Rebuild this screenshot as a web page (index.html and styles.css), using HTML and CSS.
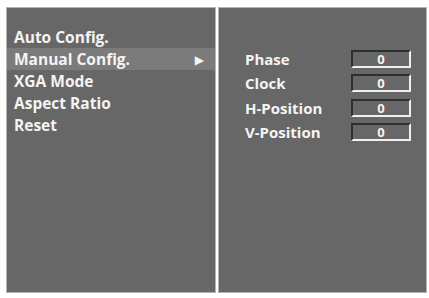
FILE: index.html
```html
<!DOCTYPE html>
<html lang="en">
<head>
    <meta charset="UTF-8">
    <title>Picture Setup</title>
    <link rel="stylesheet" href="styles.css">
</head>
<body>
    <div class="screen">
        <div class="panel menu">
            <div class="item">Auto Config.</div>
            <div class="item active">Manual Config. <span class="arrow">&#9654;</span></div>
            <div class="item">XGA Mode</div>
            <div class="item">Aspect Ratio</div>
            <div class="item">Reset</div>
        </div>
        <div class="panel settings">
            <div class="row"><span class="label">Phase</span><span class="value">0</span></div>
            <div class="row"><span class="label">Clock</span><span class="value">0</span></div>
            <div class="row"><span class="label">H-Position</span><span class="value">0</span></div>
            <div class="row"><span class="label">V-Position</span><span class="value">0</span></div>
        </div>
    </div>
</body>
</html>
```

FILE: styles.css
```css
* { margin: 0; padding: 0; box-sizing: border-box; }
body {
    background: #fff;
    font-family: "Open Sans", "DejaVu Sans", sans-serif;
    color: #f4f4f4;
}
.screen {
    display: flex;
    gap: 2px;
    padding: 7px 0 0 6px;
}
.panel {
    background: #676767;
    border: 1px solid #b4b4b4;
    height: 286px;
}
.menu {
    width: 210px;
    padding-top: 18px;
}
.item {
    display: flex;
    align-items: center;
    justify-content: space-between;
    height: 22px;
    padding: 0 11px 0 7px;
    font-size: 15.5px;
    font-weight: 700;
}
.item.active {
    background: #7b7b7b;
}
.arrow {
    font-size: 12px;
}
.settings {
    width: 209px;
    padding: 39px 15px 0 26px;
}
.row {
    display: flex;
    align-items: center;
    justify-content: space-between;
    height: 24.3px;
    font-size: 15px;
    font-weight: 700;
}
.value {
    width: 60px;
    height: 18px;
    border-top: 2px solid #2e2e2e;
    border-left: 2px solid #2e2e2e;
    border-bottom: 2px solid #f0f0f0;
    border-right: 2px solid #f0f0f0;
    text-align: center;
    font-size: 13px;
    line-height: 14px;
}
```
